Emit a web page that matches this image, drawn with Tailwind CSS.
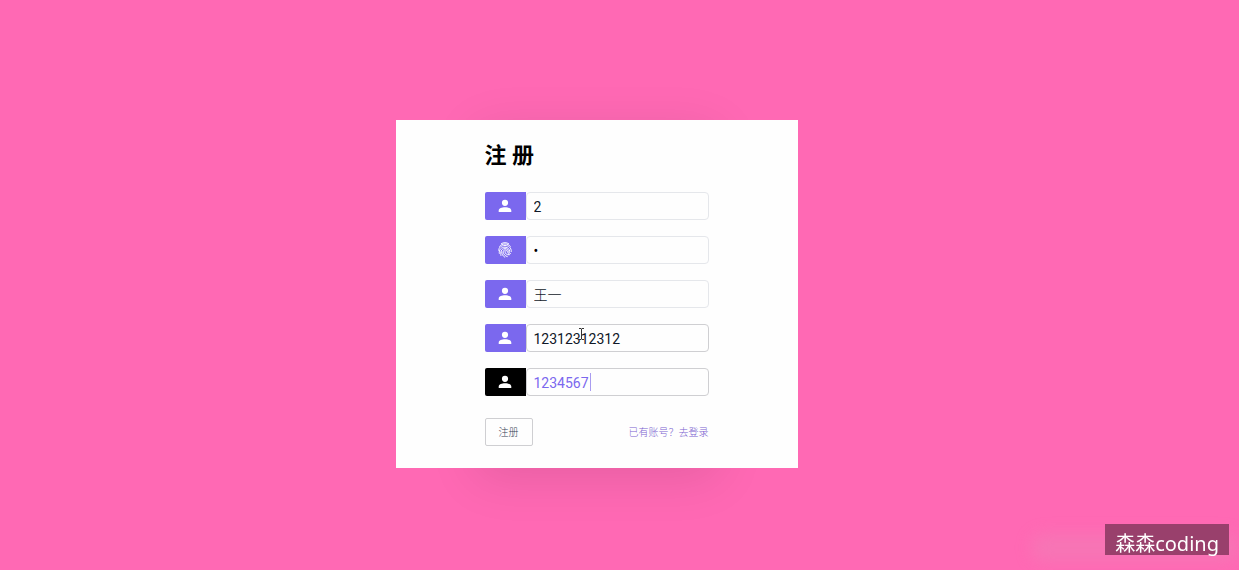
<!DOCTYPE html>
<html lang="zh-CN">
<head>
<meta charset="utf-8">
<meta name="viewport" content="width=device-width, initial-scale=1">
<title>注册</title>
<script src="https://cdn.jsdelivr.net/npm/@tailwindcss/browser@4"></script>
</head>
<body class="bg-[#ff69b4] font-['Roboto','Noto_Sans_CJK_SC',sans-serif] text-black">
<svg class="hidden" aria-hidden="true">
  <symbol id="user" viewBox="0 0 16 16"><path fill="currentColor" d="M8 1.700a3.100 3.100 0 1 1 0 6.200 3.100 3.100 0 0 1 0-6.200ZM1.700 14v-1.500C1.700 10.300 5 9.200 8 9.200s6.300 1.100 6.300 3.300V14Z"/></symbol>
  <symbol id="finger" viewBox="0 0 16 16"><g fill="none" stroke="currentColor" stroke-width=".95" stroke-linecap="round"><path d="M4.400 1.600C6.500.3 9.500.3 11.600 1.600M2.600 4.300c2.100-3.200 8.700-3.200 10.800 0M1.800 8.500C1.300 5.400 4.400 3.500 8 3.500s6.500 2.200 6.300 6M2.300 11.400C1.700 7.500 4.400 5.200 8 5.200c2.900 0 4.700 2 4.700 4.500 0 1.700-2 1.700-2.300.2C10.200 8.500 9.300 8 8 8c-1.400 0-1.900 1-1.700 2.300.4 2.200 1.800 3.700 4 4.300M3.900 13.500c-.7-3 .1-6.800 4.100-6.900 2 0 3.200 1 3.400 2.700M7.800 15.200C5.700 14 4.700 12 4.800 9.900M8 9.500c0 2.300 1.700 3.600 4.300 3.300M13.800 11.300c-.5.8-1.700 1-2.600.7"/></g></symbol>
</svg>

<main class="flex min-h-screen items-center justify-center pt-[18px] pr-[46px]">
  <section class="relative isolate w-full max-w-[402px] before:absolute before:inset-x-20 before:inset-y-0 before:-z-10 before:shadow-[0_10px_46px_rgba(0,0,0,0.1)]">
    <div class="bg-[#fefefe] px-[89px] pt-5 pb-[22px]">
      <h1 class="mb-5 text-[22px] leading-8 font-bold">注 册</h1>
      <form class="flex flex-col gap-4">
        <label class="flex h-7">
          <span class="flex w-[41px] items-center justify-center rounded-l-xs bg-[#7b68ee] text-white"><svg class="size-4" role="img" aria-label="用户名"><use href="#user"/></svg></span>
          <input type="text" value="2" class="min-w-0 flex-1 rounded-sm border border-gray-200 px-[7px] pt-0.5 text-[14px] text-gray-900 outline-none">
        </label>
        <label class="flex h-7">
          <span class="flex w-[41px] items-center justify-center rounded-l-xs bg-[#7b68ee] text-white"><svg class="size-4" role="img" aria-label="密码"><use href="#finger"/></svg></span>
          <input type="password" value="2" class="min-w-0 flex-1 rounded-sm border border-gray-200 px-[7px] pt-0.5 text-[14px] text-black outline-none">
        </label>
        <label class="flex h-7">
          <span class="flex w-[41px] items-center justify-center rounded-l-xs bg-[#7b68ee] text-white"><svg class="size-4" role="img" aria-label="姓名"><use href="#user"/></svg></span>
          <input type="text" value="王一" class="min-w-0 flex-1 rounded-sm border border-gray-200 px-[7px] pt-0.5 text-[14px] font-light text-gray-900 outline-none">
        </label>
        <label class="flex h-7">
          <span class="flex w-[41px] items-center justify-center rounded-l-xs bg-[#7b68ee] text-white"><svg class="size-4" role="img" aria-label="电话"><use href="#user"/></svg></span>
          <input type="text" value="12312312312" class="min-w-0 flex-1 rounded-sm border border-[#cfcfd2] px-[7px] pt-0.5 text-[14px] text-gray-900 outline-none">
        </label>
        <label class="relative flex h-7">
          <span class="flex w-[41px] items-center justify-center rounded-l-xs bg-black text-white"><svg class="size-4" role="img" aria-label="证件号"><use href="#user"/></svg></span>
          <input type="text" value="1234567" class="min-w-0 flex-1 rounded-sm border border-[#cfcfd2] px-[7px] pt-0.5 text-[14px] text-[#7b68ee] outline-none">
          <span class="absolute top-[5px] left-[105px] h-[18px] w-px bg-[#a99cf0]"></span>
        </label>
        <div class="mt-1.5 flex items-center justify-between text-[10px] font-light">
          <button type="button" class="h-7 w-12 rounded-xs border border-[#cfcfd2] text-gray-700">注册</button>
          <a href="#" class="text-[#7a5fd0]">已有账号？去登录</a>
        </div>
      </form>
    </div>
    <svg class="absolute top-[208px] left-[182px] h-3 w-[7px]" viewBox="0 0 7 12" fill="none" stroke="#333" aria-hidden="true"><path d="M1 .5h2l.5.5.5-.5h2M3.500 1v10M1 11.500h2l.5-.5.5.5h2"/></svg>
  </section>
</main>

<div class="fixed right-0 bottom-2 h-7 w-52 rounded-full bg-[#e98bb8]/35 blur-[8px]"></div>
<div class="fixed right-2.5 bottom-[15px] flex h-[31px] items-center bg-[#99406c] px-2.5 pt-2 font-['Noto_Sans','Noto_Sans_CJK_SC',sans-serif] text-[20px] leading-none text-white">森森coding</div>
</body>
</html>
